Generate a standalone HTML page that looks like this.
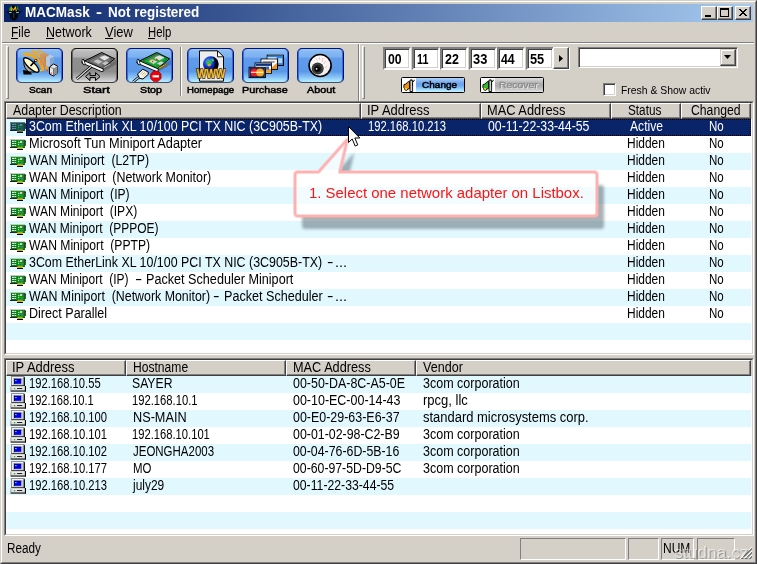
<!DOCTYPE html><html><head><meta charset="utf-8"><title>MACMask - Not registered</title><style>
*{box-sizing:border-box;margin:0;padding:0}
html,body{width:757px;height:564px;overflow:hidden;background:#d4d0c8}
body{position:relative;font-family:"Liberation Sans",sans-serif;font-size:12px;color:#000;line-height:17px}
.a{position:absolute}
.t{position:absolute;white-space:pre;line-height:17px;height:17px}
.x{position:absolute;display:block;white-space:pre;line-height:20px;height:20px;transform-origin:0 0}
#win{position:absolute;left:0;top:0;width:757px;height:564px;background:#d4d0c8;
 border-left:1px solid #d4d0c8;border-top:1px solid #d4d0c8;border-right:1px solid #404040;border-bottom:1px solid #404040}
#win2{position:absolute;left:1px;top:1px;width:755px;height:562px;border-left:1px solid #fff;border-top:1px solid #fff;border-right:1px solid #808080;border-bottom:1px solid #808080}
#title{left:4px;top:4px;width:749px;height:18px;background:linear-gradient(90deg,#0a246a,#a6caf0)}
#title .tt{left:20px;top:0;color:#fff;font-weight:bold;font-size:13px;line-height:18px;letter-spacing:0.35px;white-space:pre}
.cb{position:absolute;top:6px;width:16px;height:14px;background:#d4d0c8;border:1px solid;border-color:#fff #404040 #404040 #fff;box-shadow:inset -1px -1px 0 #808080}
.menu{position:absolute;top:23px;font-size:13px;line-height:18px;white-space:pre}
.menu u{text-decoration:underline;text-underline-offset:1px}
.sunk{position:absolute;border:1px solid;border-color:#808080 #fff #fff #808080}
.sunk>.in{position:absolute;left:0;top:0;right:0;bottom:0;border:1px solid;border-color:#404040 #d4d0c8 #d4d0c8 #404040;background:#fff;overflow:hidden}
.hd{position:absolute;top:0;height:16px;background:#d4d0c8;border:1px solid;border-color:#fff #404040 #404040 #fff;box-shadow:inset -1px -1px 0 #808080;font-size:12px;line-height:14px;white-space:pre;overflow:hidden}
.row{position:absolute;left:0;width:745px;height:17px}
.lb{background:#e2f8ff}
.tb{position:absolute;top:48px;width:47px;height:35px;overflow:hidden;border-radius:5px;border:1px solid;border-color:#00107c #001070 #40506c #0c2c9c;
 background:linear-gradient(180deg,#a0c8f6 0%,#88baf2 7%,#7cb0f0 24%,#609cea 28%,#5a98e8 68%,#84c0f6 84%,#b8f0ff 100%);box-shadow:inset 1px 0 0 #3c6cd8,inset -1px 0 0 #3c6cd8}
.tb.g{border-color:#101010 #000 #404040 #202020;background:linear-gradient(180deg,#d0d0d0 0%,#bcbcbc 7%,#b0b0b0 24%,#909090 28%,#8c8c8c 68%,#b0b0b0 84%,#dcdcdc 100%);box-shadow:inset 1px 0 0 #686868,inset -1px 0 0 #686868}
.tl{position:absolute;top:84px;height:12px;font-size:10px;line-height:12px;text-align:center;white-space:pre;letter-spacing:0.4px;font-weight:bold}
.ed{position:absolute;top:47px;width:28px;height:23px;border:2px solid;border-color:#808080 #fff #fff #808080;background:#fff;box-shadow:inset 1px 1px 0 #404040, inset -1px -1px 0 #d4d0c8;font-weight:bold;font-size:13px;line-height:21px;padding-left:3px;white-space:pre}
.grip{position:absolute;width:3px;border:1px solid;border-color:#fff #808080 #808080 #fff;background:#d4d0c8}
.sp{position:absolute;top:538px;height:22px;border:1px solid;border-color:#808080 #fff #fff #808080}
</style></head><body>
<div id="win"></div><div id="win2"></div>
<div id="title" class="a">
<svg class="a" style="left:2px;top:1px" width="16" height="16" viewBox="0 0 16 16"><path d="M0 6.3 L3.2 6.5 Q2.5 1.2 7.8 0.3 Q13.2 1.2 12.6 6.5 L16 6.3 L13 9 L12.2 9.6 L11.8 13 L9.5 15.2 L8 15.6 L6.3 15.2 L4 13 L3.7 9.6 L3 9Z" fill="#04080c"/><path d="M3.4 5.8 Q2.6 2 6 1 L5.2 6Z" fill="#20b020"/><path d="M10.5 1.2 Q13 2.5 12.4 5.5 L11 4Z" fill="#18a018"/><path d="M5 6 L5.4 1.8 L7.3 4.2 L9.6 1.2 L11 6.2 L9.8 6.2 L9.2 3.8 L7.4 6 L6.3 4 L6 6.2Z" fill="#f8a810"/><path d="M8.6 2.6 L9.6 1.2 L10 2.8Z" fill="#f8e020"/><rect x="3" y="7" width="2.6" height="1.1" fill="#70c0f8"/><rect x="10.2" y="7" width="2.6" height="1.1" fill="#70c0f8"/><path d="M7.4 8 L8.2 8 L8.1 13 L7.5 13Z" fill="#305868"/><path d="M4.6 13 Q8 16.5 11.2 13 L9.5 14.3 L8 14.8 L6.3 14.3Z" fill="#20a828"/></svg>
</div>
<div class="a" style="left:0;top:0">
<span class="x" style="left:24.80px;top:2px;font-size:14px;font-weight:bold;color:#fff;transform:scaleX(0.9672);">MACMask</span>
 
<span class="x" style="left:96.20px;top:2px;font-size:14px;font-weight:bold;color:#fff;transform:scaleX(1.2800);">-</span>
 
<span class="x" style="left:108.00px;top:2px;font-size:14px;font-weight:bold;color:#fff;transform:scaleX(0.9621);">Not registered</span>
</div>
<div class="cb" style="left:701px"><div class="a" style="left:3px;top:8px;width:6px;height:2px;background:#000"></div></div>
<div class="cb" style="left:717px"><div class="a" style="left:2px;top:1px;width:9px;height:9px;border:1px solid #000;border-top-width:2px"></div></div>
<div class="cb" style="left:735px"><svg class="a" style="left:3px;top:2px" width="8" height="7" viewBox="0 0 8 7"><path d="M0 0L7 7M1 0L8 7M7 0L0 7M8 0L1 7" stroke="#000" stroke-width="1" fill="none" shape-rendering="crispEdges"/></svg></div>
<div class="x" style="left:11.20px;top:22px;font-size:14px;transform:scaleX(0.8591);">File</div>
<div class="a" style="left:11px;top:38px;width:7px;height:1px;background:#000"></div>
<div class="x" style="left:45.60px;top:22px;font-size:14px;transform:scaleX(0.8922);">Network</div>
<div class="a" style="left:46px;top:38px;width:8px;height:1px;background:#000"></div>
<div class="x" style="left:105.10px;top:22px;font-size:14px;transform:scaleX(0.9267);">View</div>
<div class="a" style="left:105px;top:38px;width:8px;height:1px;background:#000"></div>
<div class="x" style="left:147.50px;top:22px;font-size:14px;transform:scaleX(0.8103);">Help</div>
<div class="a" style="left:148px;top:38px;width:7px;height:1px;background:#000"></div>
<div class="a" style="left:2px;top:42px;width:752px;height:1px;background:#808080"></div><div class="a" style="left:2px;top:43px;width:752px;height:1px;background:#fff"></div>
<div class="grip" style="left:6px;top:46px;height:53px"></div>
<div class="a" style="left:358px;top:44px;width:1px;height:57px;background:#808080"></div><div class="a" style="left:359px;top:44px;width:1px;height:57px;background:#fff"></div>
<div class="grip" style="left:362px;top:46px;height:53px"></div>
<div class="a" style="left:180px;top:47px;width:1px;height:49px;background:#808080"></div><div class="a" style="left:181px;top:47px;width:1px;height:49px;background:#fff"></div>
<div class="tb " style="left:16px"><svg class="a" style="left:0;top:0" width="45" height="33" viewBox="1 1 45 33"><g fill="none" stroke="#f4a818" stroke-linecap="butt"><path d="M7.3 6.0 A19 19 0 0 1 26.9 23.0" stroke-width="3.2"/><path d="M15.2 2.9 A23.2 23.2 0 0 1 31.1 22.6" stroke-width="2.8" opacity=".9"/><path d="M21.6 1.4 A27.2 27.2 0 0 1 33.9 16.6" stroke-width="2.8" opacity=".7"/></g><path d="M24 7 L28.5 4.5 L33 7 L33 17 L28.5 19 L24 16.5Z" fill="#d88c50" opacity=".7"/><path d="M28.5 9 L33 7 L33 17 L28.5 19Z" fill="#c07840" opacity=".5"/><path d="M30 9 L34 6.5 L38 8.5 L38 17 L34 19.5 L30 17.5Z" fill="#b4cce8" opacity=".95"/><path d="M34 10.5 L38 8.5 L38 17 L34 19.5Z" fill="#7ea4d4" opacity=".95"/><path d="M33.5 19 L37.5 16 L41.5 18 L41.5 25 L37.5 28 L33.5 26Z" fill="#e8e8e8" stroke="#000" stroke-width="1" stroke-linejoin="round"/><path d="M37.5 20.5 L41.5 18 L41.5 25 L37.5 28Z" fill="#909090"/><path d="M33.5 19 L37.5 20.5 L37.5 28" fill="none" stroke="#404040" stroke-width=".6"/><rect x="34.6" y="24.5" width="1.2" height="1.2" fill="#f02020"/><rect x="30.5" y="21.5" width="1.3" height="1.3" fill="#f02020"/><rect x="24" y="22" width="1.2" height="1.2" fill="#ffe020"/><path d="M7 22 L14 23 L16 26.5 L7.5 26.5Z" fill="#000"/><path d="M8 13 Q7 20 13 24 L19 24 L10 12Z" fill="#a8a8a8" stroke="#000" stroke-width="1"/><ellipse cx="15.3" cy="16.8" rx="9.9" ry="3.5" transform="rotate(43 15 16.8)" fill="#fffcd0" stroke="#000" stroke-width="1.3"/><path d="M14.5 18 L19.8 12.4" stroke="#000" stroke-width="1.7"/><circle cx="19.8" cy="12.4" r="1.2" fill="#fff" stroke="#000" stroke-width=".8"/></svg></div>
<div class="x" style="left:28.90px;top:80px;font-size:9.6px;transform:scaleX(1.0591);-webkit-text-stroke:0.5px #000;">Scan</div>
<div class="tb g" style="left:71px"><svg class="a" style="left:0;top:0" width="45" height="33" viewBox="1 1 45 33"><path d="M31 24.5 L45 16.5 L45 11.5 L31.5 20Z" fill="#000" opacity=".22"/><path d="M12 13.8 L30.8 4.5 L43.6 10.8 L30.4 21.6Z" fill="#787878" stroke="#000" stroke-width="1" stroke-linejoin="round"/><path d="M17 13 L30.8 6 L41 11 L29.8 19.4Z" fill="none" stroke="#484848" stroke-width=".8"/><path d="M28.5 9.6 L33.5 7.2 L38.5 9.6 L33.5 12.4Z" fill="#e4e4e4"/><path d="M22.5 13.2 L26.5 11.2 L31.5 13.8 L27.5 16Z" fill="#c4c4c4"/><path d="M31 15.5 L35 13.3 L38 14.8 L34 17.2Z" fill="#c4c4c4"/><path d="M32 19.2 L39 15.4 L40 16.4 L33 20.4Z" fill="#d0d0d0" stroke="#202020" stroke-width=".5"/><path d="M12.3 14 L30.8 22" stroke="#000" stroke-width="3.8" stroke-linecap="round"/><path d="M12.3 14 L30.8 22" stroke="#fafafa" stroke-width="2.2" stroke-linecap="round"/><path d="M12 12.4 L13.2 16" stroke="#000" stroke-width="2.6" stroke-linecap="round"/><path d="M12 12.6 L13.1 15.8" stroke="#fff" stroke-width="1.3" stroke-linecap="round"/><path d="M20.5 18.2 L5.8 31" stroke="#000" stroke-width="2.8"/><path d="M20.5 18.2 L5.8 31" stroke="#ececec" stroke-width="1.1"/><path d="M14.5 28.6 L19 24.6 L19 27.6 L24.5 27.6 L24.5 24.6 L29 28.6 L24.5 32.6 L24.5 29.6 L19 29.6 L19 32.6Z" fill="#a4a4a4" stroke="#000" stroke-width="1" stroke-linejoin="miter"/></svg></div>
<div class="x" style="left:82.80px;top:80px;font-size:9.6px;transform:scaleX(1.3200);-webkit-text-stroke:0.5px #000;">Start</div>
<div class="tb " style="left:126px"><svg class="a" style="left:0;top:0" width="45" height="33" viewBox="1 1 45 33"><path d="M31 24.5 L45 16.5 L45 11.5 L31.5 20Z" fill="#000" opacity=".22"/><path d="M12 13.8 L30.8 4.5 L43.6 10.8 L30.4 21.6Z" fill="#1ca838" stroke="#000" stroke-width="1" stroke-linejoin="round"/><path d="M17 13 L30.8 6 L41 11 L29.8 19.4Z" fill="none" stroke="#0a6a1c" stroke-width=".8"/><path d="M28.5 9.6 L33.5 7.2 L38.5 9.6 L33.5 12.4Z" fill="#e0e0e0"/><path d="M22.5 13.2 L26.5 11.2 L31.5 13.8 L27.5 16Z" fill="#d0d4d0"/><path d="M31 15.5 L35 13.3 L38 14.8 L34 17.2Z" fill="#d0d4d0"/><g fill="#f020f0"><rect x="23" y="10.6" width="1.4" height="1.4"/><rect x="27" y="8.6" width="1.4" height="1.4"/><rect x="31" y="6.6" width="1.4" height="1.4"/></g><g fill="#f0e020"><rect x="24.6" y="11.8" width="1.4" height="1.4"/><rect x="28.6" y="9.8" width="1.4" height="1.4"/></g><g fill="#f03020"><rect x="26" y="12.8" width="1.3" height="1.3"/><rect x="30" y="10.8" width="1.3" height="1.3"/></g><path d="M32.6 19.6 L39.8 15.8 L40.8 17 L33.6 21Z" fill="#f0b818" stroke="#503000" stroke-width=".5"/><path d="M34.4 18.6 l.8 1.2 M36.2 17.7 l.8 1.2 M38 16.7 l.8 1.2" stroke="#503000" stroke-width=".5"/><path d="M12.3 14 L30.8 22" stroke="#000" stroke-width="3.8" stroke-linecap="round"/><path d="M12.3 14 L30.8 22" stroke="#fafafa" stroke-width="2.2" stroke-linecap="round"/><path d="M12 12.4 L13.2 16" stroke="#000" stroke-width="2.6" stroke-linecap="round"/><path d="M12 12.6 L13.1 15.8" stroke="#fff" stroke-width="1.3" stroke-linecap="round"/><path d="M15 27.5 L7 34" stroke="#000" stroke-width="2.6"/><path d="M15 27.5 L7 34" stroke="#c8d8e8" stroke-width="1.1"/><path d="M11.5 26 L16.8 21.2 L22.2 24 L22.2 26.4 L17 31 L13.5 30.3Z" fill="#f4f4ec" stroke="#000" stroke-width="1" stroke-linejoin="round"/><path d="M14.5 26 L17.5 23.2 M16 27 L19 24.2 M17.5 28 L20.5 25.2" stroke="#c0a040" stroke-width=".6"/><path d="M27.6 23 L32 23 L35.1 26.1 L35.1 30.5 L32 33.6 L27.6 33.6 L24.5 30.5 L24.5 26.1Z" fill="#f00008" stroke="#500000" stroke-width=".5"/><rect x="26.6" y="27.2" width="6.4" height="2.2" fill="#fff"/></svg></div>
<div class="x" style="left:139.60px;top:80px;font-size:9.6px;transform:scaleX(1.1150);-webkit-text-stroke:0.5px #000;">Stop</div>
<div class="tb " style="left:187px"><svg class="a" style="left:0;top:0" width="45" height="33" viewBox="1 1 45 33"><defs><radialGradient id="gl" cx=".35" cy=".35" r=".75"><stop offset="0" stop-color="#60a0ff"/><stop offset=".45" stop-color="#1030d0"/><stop offset=".8" stop-color="#000860"/><stop offset="1" stop-color="#000020"/></radialGradient></defs><path d="M12.5 2.8 H30.5 L36.5 8.8 V33.2 H12.5Z" fill="#ececec" stroke="#000" stroke-width="1" stroke-linejoin="miter"/><path d="M30.5 2.8 V8.8 H36.5Z" fill="#fff" stroke="#000" stroke-width=".9" stroke-linejoin="miter"/><circle cx="23.8" cy="16" r="7.8" fill="url(#gl)"/><path d="M19.5 13.5 Q22 11 24 12.5 Q25.5 14.5 23.5 17 Q21.5 19.5 20.5 17.5 Q19 16 19.5 13.5Z" fill="#30c040"/><path d="M21 16 Q23 15 24 17 Q23 19 21.5 18Z" fill="#f0a030"/><path d="M24.5 10.5 Q27 10 27 13 Q25.5 14 24.5 12.5Z" fill="#40d050"/><path d="M26.5 8.7 Q32.5 12 31.2 19 Q29.5 23.5 25 23.7 Q29.5 17 26.5 8.7Z" fill="#000" opacity=".85"/><text x="24" y="30" font-family="Liberation Sans,sans-serif" font-weight="bold" font-size="12" text-anchor="middle" fill="#f6c644" stroke="#402800" stroke-width="1.7" paint-order="stroke" textLength="28.5" lengthAdjust="spacingAndGlyphs">WWW</text></svg></div>
<div class="x" style="left:187.00px;top:80px;font-size:9.6px;transform:scaleX(1.0043);-webkit-text-stroke:0.5px #000;">Homepage</div>
<div class="tb " style="left:242px"><svg class="a" style="left:0;top:0" width="45" height="33" viewBox="1 1 45 33"><g transform="translate(25.2 7.2)"><rect x="0" y="0" width="16.3" height="10.3" fill="#fff" stroke="#000" stroke-width="1"/><rect x=".5" y=".5" width="15.3" height="9.3" fill="#2c84dc"/><rect x=".5" y="2" width="9" height="2" fill="#e8f0f8"/><rect x="11" y="3" width="4" height="5" fill="#b8d4f0"/></g><g transform="translate(19.1 11.1)"><rect x="0" y="0" width="16.3" height="10.3" fill="#fff" stroke="#000" stroke-width="1"/><rect x=".5" y=".5" width="15.3" height="9.3" fill="#f8f8f8"/><path d="M9 9.8 L15.8 4 V9.8Z" fill="#f09020"/><rect x="1.5" y="2" width="12" height="1.6" fill="#909090"/></g><g transform="translate(13.1 15)"><rect x="0" y="0" width="16.3" height="10.3" fill="#fff" stroke="#000" stroke-width="1"/><rect x=".5" y=".5" width="15.3" height="9.3" fill="#fff"/><rect x=".5" y=".5" width="15.3" height="2.4" fill="#10307c"/><rect x="10" y="6" width="5.8" height="3.8" fill="#f0a020"/><rect x="11" y="3.5" width="3" height="3" fill="#3060c0"/></g><g transform="translate(7.1 19.3)"><rect x="0" y="0" width="16.3" height="10.3" fill="#fff" stroke="#000" stroke-width="1"/><rect x=".5" y=".5" width="15.3" height="9.3" fill="#10246c"/><circle cx="5.3" cy="5.1" r="3.9" fill="#f01818"/><circle cx="11" cy="5.1" r="3.9" fill="#f8a818"/><rect x="2" y="4.4" width="12" height="1.3" fill="#fff" opacity=".8"/></g></svg></div>
<div class="x" style="left:242.00px;top:80px;font-size:9.6px;transform:scaleX(1.1268);-webkit-text-stroke:0.5px #000;">Purchase</div>
<div class="tb " style="left:297px"><svg class="a" style="left:0;top:0" width="45" height="33" viewBox="1 1 45 33"><defs><radialGradient id="ey" cx=".4" cy=".35" r=".7"><stop offset="0" stop-color="#fff"/><stop offset=".8" stop-color="#f4f0f0"/><stop offset="1" stop-color="#c8c8c8"/></radialGradient></defs><circle cx="23.6" cy="18" r="11" fill="#000" opacity=".55"/><circle cx="23.1" cy="17.5" r="11" fill="url(#ey)" stroke="#000" stroke-width="1.6"/><path d="M22 9 l1 3 M26 10 l-1 4 M29 13 l-2 3 M19 10 l1.5 2.5 M30 18 l-2 2" stroke="#f8a0a0" stroke-width=".7" fill="none"/><circle cx="20.7" cy="20.6" r="6" fill="#383838"/><circle cx="20.7" cy="20.6" r="4.4" fill="#202020" stroke="#585858" stroke-width=".6"/><circle cx="20.2" cy="21" r="2.6" fill="#000"/><circle cx="19.6" cy="20.8" r=".9" fill="#fff"/></svg></div>
<div class="x" style="left:306.80px;top:80px;font-size:9.6px;transform:scaleX(1.1280);-webkit-text-stroke:0.5px #000;">About</div>
<div class="ed" style="left:383px"></div>
<div class="x" style="left:388.00px;top:49px;font-size:14px;font-weight:bold;transform:scaleX(0.8750);">00</div>
<div class="ed" style="left:412px"></div>
<div class="x" style="left:416.50px;top:49px;font-size:14px;font-weight:bold;transform:scaleX(0.7667);">11</div>
<div class="ed" style="left:440px"></div>
<div class="x" style="left:444.80px;top:49px;font-size:14px;font-weight:bold;transform:scaleX(0.8875);">22</div>
<div class="ed" style="left:469px"></div>
<div class="x" style="left:472.50px;top:49px;font-size:14px;font-weight:bold;transform:scaleX(0.9187);">33</div>
<div class="ed" style="left:497px"></div>
<div class="x" style="left:501.30px;top:49px;font-size:14px;font-weight:bold;transform:scaleX(0.8750);">44</div>
<div class="ed" style="left:526px"></div>
<div class="x" style="left:529.60px;top:49px;font-size:14px;font-weight:bold;transform:scaleX(0.9125);">55</div>
<div class="a" style="left:553px;top:47px;width:16px;height:22px;background:#d4d0c8;border:1px solid;border-color:#fff #404040 #404040 #fff;box-shadow:inset -1px -1px 0 #808080, 1px 1px 0 #fff"><svg class="a" style="left:5px;top:7px" width="4" height="7"><path d="M0 0L4 3.5L0 7Z" fill="#000"/></svg></div>
<div class="a" style="left:578px;top:47px;width:160px;height:21px;border:1px solid;border-color:#808080 #fff #fff #808080;background:#fff;box-shadow:inset 1px 1px 0 #404040, inset -1px -1px 0 #d4d0c8"></div>
<div class="a" style="left:720px;top:49px;width:16px;height:17px;background:#d4d0c8;border:1px solid;border-color:#d4d0c8 #404040 #404040 #d4d0c8;box-shadow:inset -1px -1px 0 #808080, inset 1px 1px 0 #fff"><svg class="a" style="left:3px;top:5px" width="7" height="4"><path d="M0 0L7 0L3.5 4Z" fill="#000"/></svg></div>
<div class="a" style="left:401px;top:77px;width:64px;height:16px;border:1px solid #000;border-radius:1.5px;background:#fff;overflow:hidden"><div class="a" style="left:14px;top:0;width:48px;height:14px;background:linear-gradient(180deg,#b4d4f8 0%,#86b6f0 22%,#68a2ee 42%,#74aef0 60%,#a0d8fc 82%,#c4f4ff 100%)"></div><svg class="a" style="left:0;top:0" width="14" height="14" viewBox="0 0 14 14"><path d="M2 6.5 L4.2 6 L5.5 4.2 L7.6 3.2 L7.6 10.5 L5.8 11 L5 12.3 L3 12 L2.6 10.5 L1.8 9.5Z" fill="#f09010" stroke="#000" stroke-width=".9" stroke-linejoin="round"/><path d="M3 10 L5 10.2 L4.8 12 L3.2 11.6Z" fill="#fff000"/><path d="M8 2.2 L10.6 2.2 L10.6 13.5 L8 13.5Z" fill="#d4d4d4" stroke="#000" stroke-width=".9"/><path d="M9 1.2 L9.6 2.4 M10.6 3.8 L12 3.2 L12.2 1.8" stroke="#000" stroke-width=".9" fill="none"/><rect x="10" y="5.5" width="1" height="2" fill="#000"/></svg></div>
<div class="x" style="left:421.60px;top:75px;font-size:9.6px;color:#000;transform:scaleX(1.0441);-webkit-text-stroke:0.5px #000;">Change</div>
<div class="a" style="left:480px;top:77px;width:64px;height:16px;border:1px solid #000;border-radius:1.5px;background:#fff;overflow:hidden"><div class="a" style="left:14px;top:0;width:48px;height:14px;background:linear-gradient(180deg,#e0e0e0 0%,#c4c4c4 22%,#acacac 42%,#b0b0b0 60%,#c8c8c8 82%,#e4e4e4 100%)"></div><svg class="a" style="left:0;top:0" width="14" height="14" viewBox="0 0 14 14"><path d="M2 6.5 L4.2 6 L5.5 4.2 L7.6 3.2 L7.6 10.5 L5.8 11 L5 12.3 L3 12 L2.6 10.5 L1.8 9.5Z" fill="#30b828" stroke="#000" stroke-width=".9" stroke-linejoin="round"/><path d="M3 10 L5 10.2 L4.8 12 L3.2 11.6Z" fill="#f0f000"/><path d="M8 2.2 L10.6 2.2 L10.6 13.5 L8 13.5Z" fill="#d4d4d4" stroke="#000" stroke-width=".9"/><path d="M9 1.2 L9.6 2.4 M10.6 3.8 L12 3.2 L12.2 1.8" stroke="#000" stroke-width=".9" fill="none"/><rect x="10" y="5.5" width="1" height="2" fill="#000"/></svg></div>
<div class="x" style="left:498.90px;top:75px;font-size:9.6px;color:#8c8c8c;transform:scaleX(1.0806);-webkit-text-stroke:0.3px #8c8c8c;text-shadow:1px 1px 0 #e8e8e8;">Recover</div>
<div class="a" style="left:603px;top:83px;width:13px;height:13px;border:1px solid;border-color:#808080 #fff #fff #808080;background:#fff;box-shadow:inset 1px 1px 0 #404040, inset -1px -1px 0 #d4d0c8"></div>
<div class="x" style="left:620.90px;top:80px;font-size:11px;transform:scaleX(0.9453);">Fresh &amp; Show activ</div>
<div class="sunk" style="left:4px;top:101px;width:750px;height:254px"><div class="in">
<div class="row lb" style="top:16px"></div>
<div class="row" style="top:33px"></div>
<div class="row lb" style="top:50px"></div>
<div class="row" style="top:67px"></div>
<div class="row lb" style="top:84px"></div>
<div class="row" style="top:101px"></div>
<div class="row lb" style="top:118px"></div>
<div class="row" style="top:135px"></div>
<div class="row lb" style="top:152px"></div>
<div class="row" style="top:169px"></div>
<div class="row lb" style="top:186px"></div>
<div class="row" style="top:203px"></div>
<div class="row lb" style="top:220px"></div>
<div class="row" style="top:237px"></div>
<div class="a" style="left:0;top:0;width:100%;height:16px;background:#d4d0c8"></div>
<div class="hd" style="left:0px;width:355px"></div>
<div class="hd" style="left:355px;width:120px"></div>
<div class="hd" style="left:475px;width:130px"></div>
<div class="hd" style="left:605px;width:70px"></div>
<div class="hd" style="left:675px;width:70px"></div>
<div class="a" style="left:20px;top:16px;width:725px;height:17px;background:#0a246a;outline:1px dotted #000;outline-offset:-1px"></div>
<svg class="a" style="left:4px;top:19px" width="17" height="12" viewBox="0 0 17 12"><rect x="0" y="0" width="15" height="1" fill="#c8c8c8"/><rect x="0" y="1" width="15" height="8" fill="#16a81a"/><rect x="0" y="1" width="1" height="7" fill="#e8e0e8"/><rect x="1" y="1" width="1" height="8" fill="#0a6a10"/><rect x="6.5" y="1" width="1.2" height="8" fill="#0c7414"/><rect x="13.5" y="1" width="1" height="8" fill="#0a6a10"/><rect x="2" y="2" width="2" height="1" fill="#e0e8f0"/><rect x="4.5" y="2" width="1.6" height="1" fill="#e0e8f0"/><rect x="2" y="4" width="2" height="1" fill="#d0e0f8"/><rect x="4.5" y="4" width="1.6" height="1" fill="#e0e8f0"/><rect x="2" y="6" width="2" height="1" fill="#e0e8f0"/><rect x="4.5" y="6" width="1.6" height="1" fill="#e0e8f0"/><rect x="2" y="3" width="4.5" height="1" fill="#0c7c14"/><rect x="2" y="5" width="4.5" height="1" fill="#0c7c14"/><rect x="2" y="7" width="4.5" height="1" fill="#0c7c14"/><rect x="9.5" y="1.5" width="3.6" height="3" fill="#0c6c14"/><rect x="10" y="2" width="2.3" height="2" fill="#d8c8e8"/><rect x="8" y="3" width="1.5" height="1" fill="#b0d8b0"/><rect x="8" y="5" width="1" height="1" fill="#b0d8b0"/><rect x="9.5" y="6" width="3" height="1" fill="#404878"/><rect x="11" y="6" width="1" height="1" fill="#3080c0"/><rect x="14.5" y="1.5" width="1.5" height="5.5" fill="#183018"/><rect x="15" y="3" width="1" height="4" fill="#505050"/><rect x="0" y="8" width="7.5" height="1" fill="#202820"/><rect x="12.5" y="8" width="2.5" height="1" fill="#106018"/><rect x="7.3" y="8.3" width="5.4" height="1.7" fill="#f0a818"/><rect x="9.3" y="8.3" width="1.2" height="1.7" fill="#60d020"/><rect x="7" y="10" width="6" height="1" fill="#000"/><path d="M0 0H15V1.5H16V7H15V9H13V11H7V9H0Z" fill="#0a246a" opacity=".5"/></svg>
<svg class="a" style="left:4px;top:36px" width="17" height="12" viewBox="0 0 17 12"><rect x="0" y="0" width="15" height="1" fill="#c8c8c8"/><rect x="0" y="1" width="15" height="8" fill="#16a81a"/><rect x="0" y="1" width="1" height="7" fill="#e8e0e8"/><rect x="1" y="1" width="1" height="8" fill="#0a6a10"/><rect x="6.5" y="1" width="1.2" height="8" fill="#0c7414"/><rect x="13.5" y="1" width="1" height="8" fill="#0a6a10"/><rect x="2" y="2" width="2" height="1" fill="#e0e8f0"/><rect x="4.5" y="2" width="1.6" height="1" fill="#e0e8f0"/><rect x="2" y="4" width="2" height="1" fill="#d0e0f8"/><rect x="4.5" y="4" width="1.6" height="1" fill="#e0e8f0"/><rect x="2" y="6" width="2" height="1" fill="#e0e8f0"/><rect x="4.5" y="6" width="1.6" height="1" fill="#e0e8f0"/><rect x="2" y="3" width="4.5" height="1" fill="#0c7c14"/><rect x="2" y="5" width="4.5" height="1" fill="#0c7c14"/><rect x="2" y="7" width="4.5" height="1" fill="#0c7c14"/><rect x="9.5" y="1.5" width="3.6" height="3" fill="#0c6c14"/><rect x="10" y="2" width="2.3" height="2" fill="#d8c8e8"/><rect x="8" y="3" width="1.5" height="1" fill="#b0d8b0"/><rect x="8" y="5" width="1" height="1" fill="#b0d8b0"/><rect x="9.5" y="6" width="3" height="1" fill="#404878"/><rect x="11" y="6" width="1" height="1" fill="#3080c0"/><rect x="14.5" y="1.5" width="1.5" height="5.5" fill="#183018"/><rect x="15" y="3" width="1" height="4" fill="#505050"/><rect x="0" y="8" width="7.5" height="1" fill="#202820"/><rect x="12.5" y="8" width="2.5" height="1" fill="#106018"/><rect x="7.3" y="8.3" width="5.4" height="1.7" fill="#f0a818"/><rect x="9.3" y="8.3" width="1.2" height="1.7" fill="#60d020"/><rect x="7" y="10" width="6" height="1" fill="#000"/></svg>
<svg class="a" style="left:4px;top:53px" width="17" height="12" viewBox="0 0 17 12"><rect x="0" y="0" width="15" height="1" fill="#c8c8c8"/><rect x="0" y="1" width="15" height="8" fill="#16a81a"/><rect x="0" y="1" width="1" height="7" fill="#e8e0e8"/><rect x="1" y="1" width="1" height="8" fill="#0a6a10"/><rect x="6.5" y="1" width="1.2" height="8" fill="#0c7414"/><rect x="13.5" y="1" width="1" height="8" fill="#0a6a10"/><rect x="2" y="2" width="2" height="1" fill="#e0e8f0"/><rect x="4.5" y="2" width="1.6" height="1" fill="#e0e8f0"/><rect x="2" y="4" width="2" height="1" fill="#d0e0f8"/><rect x="4.5" y="4" width="1.6" height="1" fill="#e0e8f0"/><rect x="2" y="6" width="2" height="1" fill="#e0e8f0"/><rect x="4.5" y="6" width="1.6" height="1" fill="#e0e8f0"/><rect x="2" y="3" width="4.5" height="1" fill="#0c7c14"/><rect x="2" y="5" width="4.5" height="1" fill="#0c7c14"/><rect x="2" y="7" width="4.5" height="1" fill="#0c7c14"/><rect x="9.5" y="1.5" width="3.6" height="3" fill="#0c6c14"/><rect x="10" y="2" width="2.3" height="2" fill="#d8c8e8"/><rect x="8" y="3" width="1.5" height="1" fill="#b0d8b0"/><rect x="8" y="5" width="1" height="1" fill="#b0d8b0"/><rect x="9.5" y="6" width="3" height="1" fill="#404878"/><rect x="11" y="6" width="1" height="1" fill="#3080c0"/><rect x="14.5" y="1.5" width="1.5" height="5.5" fill="#183018"/><rect x="15" y="3" width="1" height="4" fill="#505050"/><rect x="0" y="8" width="7.5" height="1" fill="#202820"/><rect x="12.5" y="8" width="2.5" height="1" fill="#106018"/><rect x="7.3" y="8.3" width="5.4" height="1.7" fill="#f0a818"/><rect x="9.3" y="8.3" width="1.2" height="1.7" fill="#60d020"/><rect x="7" y="10" width="6" height="1" fill="#000"/></svg>
<svg class="a" style="left:4px;top:70px" width="17" height="12" viewBox="0 0 17 12"><rect x="0" y="0" width="15" height="1" fill="#c8c8c8"/><rect x="0" y="1" width="15" height="8" fill="#16a81a"/><rect x="0" y="1" width="1" height="7" fill="#e8e0e8"/><rect x="1" y="1" width="1" height="8" fill="#0a6a10"/><rect x="6.5" y="1" width="1.2" height="8" fill="#0c7414"/><rect x="13.5" y="1" width="1" height="8" fill="#0a6a10"/><rect x="2" y="2" width="2" height="1" fill="#e0e8f0"/><rect x="4.5" y="2" width="1.6" height="1" fill="#e0e8f0"/><rect x="2" y="4" width="2" height="1" fill="#d0e0f8"/><rect x="4.5" y="4" width="1.6" height="1" fill="#e0e8f0"/><rect x="2" y="6" width="2" height="1" fill="#e0e8f0"/><rect x="4.5" y="6" width="1.6" height="1" fill="#e0e8f0"/><rect x="2" y="3" width="4.5" height="1" fill="#0c7c14"/><rect x="2" y="5" width="4.5" height="1" fill="#0c7c14"/><rect x="2" y="7" width="4.5" height="1" fill="#0c7c14"/><rect x="9.5" y="1.5" width="3.6" height="3" fill="#0c6c14"/><rect x="10" y="2" width="2.3" height="2" fill="#d8c8e8"/><rect x="8" y="3" width="1.5" height="1" fill="#b0d8b0"/><rect x="8" y="5" width="1" height="1" fill="#b0d8b0"/><rect x="9.5" y="6" width="3" height="1" fill="#404878"/><rect x="11" y="6" width="1" height="1" fill="#3080c0"/><rect x="14.5" y="1.5" width="1.5" height="5.5" fill="#183018"/><rect x="15" y="3" width="1" height="4" fill="#505050"/><rect x="0" y="8" width="7.5" height="1" fill="#202820"/><rect x="12.5" y="8" width="2.5" height="1" fill="#106018"/><rect x="7.3" y="8.3" width="5.4" height="1.7" fill="#f0a818"/><rect x="9.3" y="8.3" width="1.2" height="1.7" fill="#60d020"/><rect x="7" y="10" width="6" height="1" fill="#000"/></svg>
<svg class="a" style="left:4px;top:87px" width="17" height="12" viewBox="0 0 17 12"><rect x="0" y="0" width="15" height="1" fill="#c8c8c8"/><rect x="0" y="1" width="15" height="8" fill="#16a81a"/><rect x="0" y="1" width="1" height="7" fill="#e8e0e8"/><rect x="1" y="1" width="1" height="8" fill="#0a6a10"/><rect x="6.5" y="1" width="1.2" height="8" fill="#0c7414"/><rect x="13.5" y="1" width="1" height="8" fill="#0a6a10"/><rect x="2" y="2" width="2" height="1" fill="#e0e8f0"/><rect x="4.5" y="2" width="1.6" height="1" fill="#e0e8f0"/><rect x="2" y="4" width="2" height="1" fill="#d0e0f8"/><rect x="4.5" y="4" width="1.6" height="1" fill="#e0e8f0"/><rect x="2" y="6" width="2" height="1" fill="#e0e8f0"/><rect x="4.5" y="6" width="1.6" height="1" fill="#e0e8f0"/><rect x="2" y="3" width="4.5" height="1" fill="#0c7c14"/><rect x="2" y="5" width="4.5" height="1" fill="#0c7c14"/><rect x="2" y="7" width="4.5" height="1" fill="#0c7c14"/><rect x="9.5" y="1.5" width="3.6" height="3" fill="#0c6c14"/><rect x="10" y="2" width="2.3" height="2" fill="#d8c8e8"/><rect x="8" y="3" width="1.5" height="1" fill="#b0d8b0"/><rect x="8" y="5" width="1" height="1" fill="#b0d8b0"/><rect x="9.5" y="6" width="3" height="1" fill="#404878"/><rect x="11" y="6" width="1" height="1" fill="#3080c0"/><rect x="14.5" y="1.5" width="1.5" height="5.5" fill="#183018"/><rect x="15" y="3" width="1" height="4" fill="#505050"/><rect x="0" y="8" width="7.5" height="1" fill="#202820"/><rect x="12.5" y="8" width="2.5" height="1" fill="#106018"/><rect x="7.3" y="8.3" width="5.4" height="1.7" fill="#f0a818"/><rect x="9.3" y="8.3" width="1.2" height="1.7" fill="#60d020"/><rect x="7" y="10" width="6" height="1" fill="#000"/></svg>
<svg class="a" style="left:4px;top:104px" width="17" height="12" viewBox="0 0 17 12"><rect x="0" y="0" width="15" height="1" fill="#c8c8c8"/><rect x="0" y="1" width="15" height="8" fill="#16a81a"/><rect x="0" y="1" width="1" height="7" fill="#e8e0e8"/><rect x="1" y="1" width="1" height="8" fill="#0a6a10"/><rect x="6.5" y="1" width="1.2" height="8" fill="#0c7414"/><rect x="13.5" y="1" width="1" height="8" fill="#0a6a10"/><rect x="2" y="2" width="2" height="1" fill="#e0e8f0"/><rect x="4.5" y="2" width="1.6" height="1" fill="#e0e8f0"/><rect x="2" y="4" width="2" height="1" fill="#d0e0f8"/><rect x="4.5" y="4" width="1.6" height="1" fill="#e0e8f0"/><rect x="2" y="6" width="2" height="1" fill="#e0e8f0"/><rect x="4.5" y="6" width="1.6" height="1" fill="#e0e8f0"/><rect x="2" y="3" width="4.5" height="1" fill="#0c7c14"/><rect x="2" y="5" width="4.5" height="1" fill="#0c7c14"/><rect x="2" y="7" width="4.5" height="1" fill="#0c7c14"/><rect x="9.5" y="1.5" width="3.6" height="3" fill="#0c6c14"/><rect x="10" y="2" width="2.3" height="2" fill="#d8c8e8"/><rect x="8" y="3" width="1.5" height="1" fill="#b0d8b0"/><rect x="8" y="5" width="1" height="1" fill="#b0d8b0"/><rect x="9.5" y="6" width="3" height="1" fill="#404878"/><rect x="11" y="6" width="1" height="1" fill="#3080c0"/><rect x="14.5" y="1.5" width="1.5" height="5.5" fill="#183018"/><rect x="15" y="3" width="1" height="4" fill="#505050"/><rect x="0" y="8" width="7.5" height="1" fill="#202820"/><rect x="12.5" y="8" width="2.5" height="1" fill="#106018"/><rect x="7.3" y="8.3" width="5.4" height="1.7" fill="#f0a818"/><rect x="9.3" y="8.3" width="1.2" height="1.7" fill="#60d020"/><rect x="7" y="10" width="6" height="1" fill="#000"/></svg>
<svg class="a" style="left:4px;top:121px" width="17" height="12" viewBox="0 0 17 12"><rect x="0" y="0" width="15" height="1" fill="#c8c8c8"/><rect x="0" y="1" width="15" height="8" fill="#16a81a"/><rect x="0" y="1" width="1" height="7" fill="#e8e0e8"/><rect x="1" y="1" width="1" height="8" fill="#0a6a10"/><rect x="6.5" y="1" width="1.2" height="8" fill="#0c7414"/><rect x="13.5" y="1" width="1" height="8" fill="#0a6a10"/><rect x="2" y="2" width="2" height="1" fill="#e0e8f0"/><rect x="4.5" y="2" width="1.6" height="1" fill="#e0e8f0"/><rect x="2" y="4" width="2" height="1" fill="#d0e0f8"/><rect x="4.5" y="4" width="1.6" height="1" fill="#e0e8f0"/><rect x="2" y="6" width="2" height="1" fill="#e0e8f0"/><rect x="4.5" y="6" width="1.6" height="1" fill="#e0e8f0"/><rect x="2" y="3" width="4.5" height="1" fill="#0c7c14"/><rect x="2" y="5" width="4.5" height="1" fill="#0c7c14"/><rect x="2" y="7" width="4.5" height="1" fill="#0c7c14"/><rect x="9.5" y="1.5" width="3.6" height="3" fill="#0c6c14"/><rect x="10" y="2" width="2.3" height="2" fill="#d8c8e8"/><rect x="8" y="3" width="1.5" height="1" fill="#b0d8b0"/><rect x="8" y="5" width="1" height="1" fill="#b0d8b0"/><rect x="9.5" y="6" width="3" height="1" fill="#404878"/><rect x="11" y="6" width="1" height="1" fill="#3080c0"/><rect x="14.5" y="1.5" width="1.5" height="5.5" fill="#183018"/><rect x="15" y="3" width="1" height="4" fill="#505050"/><rect x="0" y="8" width="7.5" height="1" fill="#202820"/><rect x="12.5" y="8" width="2.5" height="1" fill="#106018"/><rect x="7.3" y="8.3" width="5.4" height="1.7" fill="#f0a818"/><rect x="9.3" y="8.3" width="1.2" height="1.7" fill="#60d020"/><rect x="7" y="10" width="6" height="1" fill="#000"/></svg>
<svg class="a" style="left:4px;top:138px" width="17" height="12" viewBox="0 0 17 12"><rect x="0" y="0" width="15" height="1" fill="#c8c8c8"/><rect x="0" y="1" width="15" height="8" fill="#16a81a"/><rect x="0" y="1" width="1" height="7" fill="#e8e0e8"/><rect x="1" y="1" width="1" height="8" fill="#0a6a10"/><rect x="6.5" y="1" width="1.2" height="8" fill="#0c7414"/><rect x="13.5" y="1" width="1" height="8" fill="#0a6a10"/><rect x="2" y="2" width="2" height="1" fill="#e0e8f0"/><rect x="4.5" y="2" width="1.6" height="1" fill="#e0e8f0"/><rect x="2" y="4" width="2" height="1" fill="#d0e0f8"/><rect x="4.5" y="4" width="1.6" height="1" fill="#e0e8f0"/><rect x="2" y="6" width="2" height="1" fill="#e0e8f0"/><rect x="4.5" y="6" width="1.6" height="1" fill="#e0e8f0"/><rect x="2" y="3" width="4.5" height="1" fill="#0c7c14"/><rect x="2" y="5" width="4.5" height="1" fill="#0c7c14"/><rect x="2" y="7" width="4.5" height="1" fill="#0c7c14"/><rect x="9.5" y="1.5" width="3.6" height="3" fill="#0c6c14"/><rect x="10" y="2" width="2.3" height="2" fill="#d8c8e8"/><rect x="8" y="3" width="1.5" height="1" fill="#b0d8b0"/><rect x="8" y="5" width="1" height="1" fill="#b0d8b0"/><rect x="9.5" y="6" width="3" height="1" fill="#404878"/><rect x="11" y="6" width="1" height="1" fill="#3080c0"/><rect x="14.5" y="1.5" width="1.5" height="5.5" fill="#183018"/><rect x="15" y="3" width="1" height="4" fill="#505050"/><rect x="0" y="8" width="7.5" height="1" fill="#202820"/><rect x="12.5" y="8" width="2.5" height="1" fill="#106018"/><rect x="7.3" y="8.3" width="5.4" height="1.7" fill="#f0a818"/><rect x="9.3" y="8.3" width="1.2" height="1.7" fill="#60d020"/><rect x="7" y="10" width="6" height="1" fill="#000"/></svg>
<svg class="a" style="left:4px;top:155px" width="17" height="12" viewBox="0 0 17 12"><rect x="0" y="0" width="15" height="1" fill="#c8c8c8"/><rect x="0" y="1" width="15" height="8" fill="#16a81a"/><rect x="0" y="1" width="1" height="7" fill="#e8e0e8"/><rect x="1" y="1" width="1" height="8" fill="#0a6a10"/><rect x="6.5" y="1" width="1.2" height="8" fill="#0c7414"/><rect x="13.5" y="1" width="1" height="8" fill="#0a6a10"/><rect x="2" y="2" width="2" height="1" fill="#e0e8f0"/><rect x="4.5" y="2" width="1.6" height="1" fill="#e0e8f0"/><rect x="2" y="4" width="2" height="1" fill="#d0e0f8"/><rect x="4.5" y="4" width="1.6" height="1" fill="#e0e8f0"/><rect x="2" y="6" width="2" height="1" fill="#e0e8f0"/><rect x="4.5" y="6" width="1.6" height="1" fill="#e0e8f0"/><rect x="2" y="3" width="4.5" height="1" fill="#0c7c14"/><rect x="2" y="5" width="4.5" height="1" fill="#0c7c14"/><rect x="2" y="7" width="4.5" height="1" fill="#0c7c14"/><rect x="9.5" y="1.5" width="3.6" height="3" fill="#0c6c14"/><rect x="10" y="2" width="2.3" height="2" fill="#d8c8e8"/><rect x="8" y="3" width="1.5" height="1" fill="#b0d8b0"/><rect x="8" y="5" width="1" height="1" fill="#b0d8b0"/><rect x="9.5" y="6" width="3" height="1" fill="#404878"/><rect x="11" y="6" width="1" height="1" fill="#3080c0"/><rect x="14.5" y="1.5" width="1.5" height="5.5" fill="#183018"/><rect x="15" y="3" width="1" height="4" fill="#505050"/><rect x="0" y="8" width="7.5" height="1" fill="#202820"/><rect x="12.5" y="8" width="2.5" height="1" fill="#106018"/><rect x="7.3" y="8.3" width="5.4" height="1.7" fill="#f0a818"/><rect x="9.3" y="8.3" width="1.2" height="1.7" fill="#60d020"/><rect x="7" y="10" width="6" height="1" fill="#000"/></svg>
<svg class="a" style="left:4px;top:172px" width="17" height="12" viewBox="0 0 17 12"><rect x="0" y="0" width="15" height="1" fill="#c8c8c8"/><rect x="0" y="1" width="15" height="8" fill="#16a81a"/><rect x="0" y="1" width="1" height="7" fill="#e8e0e8"/><rect x="1" y="1" width="1" height="8" fill="#0a6a10"/><rect x="6.5" y="1" width="1.2" height="8" fill="#0c7414"/><rect x="13.5" y="1" width="1" height="8" fill="#0a6a10"/><rect x="2" y="2" width="2" height="1" fill="#e0e8f0"/><rect x="4.5" y="2" width="1.6" height="1" fill="#e0e8f0"/><rect x="2" y="4" width="2" height="1" fill="#d0e0f8"/><rect x="4.5" y="4" width="1.6" height="1" fill="#e0e8f0"/><rect x="2" y="6" width="2" height="1" fill="#e0e8f0"/><rect x="4.5" y="6" width="1.6" height="1" fill="#e0e8f0"/><rect x="2" y="3" width="4.5" height="1" fill="#0c7c14"/><rect x="2" y="5" width="4.5" height="1" fill="#0c7c14"/><rect x="2" y="7" width="4.5" height="1" fill="#0c7c14"/><rect x="9.5" y="1.5" width="3.6" height="3" fill="#0c6c14"/><rect x="10" y="2" width="2.3" height="2" fill="#d8c8e8"/><rect x="8" y="3" width="1.5" height="1" fill="#b0d8b0"/><rect x="8" y="5" width="1" height="1" fill="#b0d8b0"/><rect x="9.5" y="6" width="3" height="1" fill="#404878"/><rect x="11" y="6" width="1" height="1" fill="#3080c0"/><rect x="14.5" y="1.5" width="1.5" height="5.5" fill="#183018"/><rect x="15" y="3" width="1" height="4" fill="#505050"/><rect x="0" y="8" width="7.5" height="1" fill="#202820"/><rect x="12.5" y="8" width="2.5" height="1" fill="#106018"/><rect x="7.3" y="8.3" width="5.4" height="1.7" fill="#f0a818"/><rect x="9.3" y="8.3" width="1.2" height="1.7" fill="#60d020"/><rect x="7" y="10" width="6" height="1" fill="#000"/></svg>
<svg class="a" style="left:4px;top:189px" width="17" height="12" viewBox="0 0 17 12"><rect x="0" y="0" width="15" height="1" fill="#c8c8c8"/><rect x="0" y="1" width="15" height="8" fill="#16a81a"/><rect x="0" y="1" width="1" height="7" fill="#e8e0e8"/><rect x="1" y="1" width="1" height="8" fill="#0a6a10"/><rect x="6.5" y="1" width="1.2" height="8" fill="#0c7414"/><rect x="13.5" y="1" width="1" height="8" fill="#0a6a10"/><rect x="2" y="2" width="2" height="1" fill="#e0e8f0"/><rect x="4.5" y="2" width="1.6" height="1" fill="#e0e8f0"/><rect x="2" y="4" width="2" height="1" fill="#d0e0f8"/><rect x="4.5" y="4" width="1.6" height="1" fill="#e0e8f0"/><rect x="2" y="6" width="2" height="1" fill="#e0e8f0"/><rect x="4.5" y="6" width="1.6" height="1" fill="#e0e8f0"/><rect x="2" y="3" width="4.5" height="1" fill="#0c7c14"/><rect x="2" y="5" width="4.5" height="1" fill="#0c7c14"/><rect x="2" y="7" width="4.5" height="1" fill="#0c7c14"/><rect x="9.5" y="1.5" width="3.6" height="3" fill="#0c6c14"/><rect x="10" y="2" width="2.3" height="2" fill="#d8c8e8"/><rect x="8" y="3" width="1.5" height="1" fill="#b0d8b0"/><rect x="8" y="5" width="1" height="1" fill="#b0d8b0"/><rect x="9.5" y="6" width="3" height="1" fill="#404878"/><rect x="11" y="6" width="1" height="1" fill="#3080c0"/><rect x="14.5" y="1.5" width="1.5" height="5.5" fill="#183018"/><rect x="15" y="3" width="1" height="4" fill="#505050"/><rect x="0" y="8" width="7.5" height="1" fill="#202820"/><rect x="12.5" y="8" width="2.5" height="1" fill="#106018"/><rect x="7.3" y="8.3" width="5.4" height="1.7" fill="#f0a818"/><rect x="9.3" y="8.3" width="1.2" height="1.7" fill="#60d020"/><rect x="7" y="10" width="6" height="1" fill="#000"/></svg>
<svg class="a" style="left:4px;top:206px" width="17" height="12" viewBox="0 0 17 12"><rect x="0" y="0" width="15" height="1" fill="#c8c8c8"/><rect x="0" y="1" width="15" height="8" fill="#16a81a"/><rect x="0" y="1" width="1" height="7" fill="#e8e0e8"/><rect x="1" y="1" width="1" height="8" fill="#0a6a10"/><rect x="6.5" y="1" width="1.2" height="8" fill="#0c7414"/><rect x="13.5" y="1" width="1" height="8" fill="#0a6a10"/><rect x="2" y="2" width="2" height="1" fill="#e0e8f0"/><rect x="4.5" y="2" width="1.6" height="1" fill="#e0e8f0"/><rect x="2" y="4" width="2" height="1" fill="#d0e0f8"/><rect x="4.5" y="4" width="1.6" height="1" fill="#e0e8f0"/><rect x="2" y="6" width="2" height="1" fill="#e0e8f0"/><rect x="4.5" y="6" width="1.6" height="1" fill="#e0e8f0"/><rect x="2" y="3" width="4.5" height="1" fill="#0c7c14"/><rect x="2" y="5" width="4.5" height="1" fill="#0c7c14"/><rect x="2" y="7" width="4.5" height="1" fill="#0c7c14"/><rect x="9.5" y="1.5" width="3.6" height="3" fill="#0c6c14"/><rect x="10" y="2" width="2.3" height="2" fill="#d8c8e8"/><rect x="8" y="3" width="1.5" height="1" fill="#b0d8b0"/><rect x="8" y="5" width="1" height="1" fill="#b0d8b0"/><rect x="9.5" y="6" width="3" height="1" fill="#404878"/><rect x="11" y="6" width="1" height="1" fill="#3080c0"/><rect x="14.5" y="1.5" width="1.5" height="5.5" fill="#183018"/><rect x="15" y="3" width="1" height="4" fill="#505050"/><rect x="0" y="8" width="7.5" height="1" fill="#202820"/><rect x="12.5" y="8" width="2.5" height="1" fill="#106018"/><rect x="7.3" y="8.3" width="5.4" height="1.7" fill="#f0a818"/><rect x="9.3" y="8.3" width="1.2" height="1.7" fill="#60d020"/><rect x="7" y="10" width="6" height="1" fill="#000"/></svg>
</div></div>
<div class="sunk" style="left:4px;top:358px;width:750px;height:178px"><div class="in">
<div class="row lb" style="top:16px"></div>
<div class="row" style="top:33px"></div>
<div class="row lb" style="top:50px"></div>
<div class="row" style="top:67px"></div>
<div class="row lb" style="top:84px"></div>
<div class="row" style="top:101px"></div>
<div class="row lb" style="top:118px"></div>
<div class="row" style="top:135px"></div>
<div class="row lb" style="top:152px"></div>
<div class="row" style="top:169px"></div>
<div class="a" style="left:0;top:0;width:100%;height:16px;background:#d4d0c8"></div>
<div class="hd" style="left:0px;width:120px"></div>
<div class="hd" style="left:120px;width:160px"></div>
<div class="hd" style="left:280px;width:130px"></div>
<div class="hd" style="left:410px;width:335px"></div>
<svg class="a" style="left:4px;top:16px" width="17" height="17" viewBox="0 0 17 17"><rect x="1.5" y="0.5" width="12.5" height="9" fill="#c8c8c8" stroke="#909090" stroke-width="1"/><rect x="2" y="1" width="11" height="1" fill="#f4f4f4"/><rect x="2" y="1" width="1" height="8" fill="#ececec"/><rect x="13.8" y="1.2" width="1.1" height="9" fill="#000"/><rect x="1.4" y="9.5" width="13.5" height="1" fill="#000"/><rect x="4" y="2.8" width="7.2" height="5" fill="#0000e4"/><rect x="4" y="2.8" width="7.2" height=".9" fill="#000070"/><rect x="4" y="2.8" width=".9" height="5" fill="#000070"/><rect x="5.1" y="4.1" width="1.5" height="1" fill="#60f0ff"/><rect x="0.5" y="10.5" width="14.5" height="4.2" fill="#dedede"/><rect x="0.5" y="10.5" width="14.5" height="1" fill="#f8f8f8"/><rect x="0.4" y="10.5" width="1" height="4" fill="#a0a0a0"/><rect x="14.9" y="10" width="1.1" height="5.4" fill="#000"/><rect x="0.6" y="14.5" width="15.4" height="1.1" fill="#000"/><rect x="4" y="12.2" width="1.2" height="1" fill="#00a000"/><rect x="7.1" y="12" width="5.1" height="1" fill="#202020"/></svg>
<svg class="a" style="left:4px;top:33px" width="17" height="17" viewBox="0 0 17 17"><rect x="1.5" y="0.5" width="12.5" height="9" fill="#c8c8c8" stroke="#909090" stroke-width="1"/><rect x="2" y="1" width="11" height="1" fill="#f4f4f4"/><rect x="2" y="1" width="1" height="8" fill="#ececec"/><rect x="13.8" y="1.2" width="1.1" height="9" fill="#000"/><rect x="1.4" y="9.5" width="13.5" height="1" fill="#000"/><rect x="4" y="2.8" width="7.2" height="5" fill="#0000e4"/><rect x="4" y="2.8" width="7.2" height=".9" fill="#000070"/><rect x="4" y="2.8" width=".9" height="5" fill="#000070"/><rect x="5.1" y="4.1" width="1.5" height="1" fill="#60f0ff"/><rect x="0.5" y="10.5" width="14.5" height="4.2" fill="#dedede"/><rect x="0.5" y="10.5" width="14.5" height="1" fill="#f8f8f8"/><rect x="0.4" y="10.5" width="1" height="4" fill="#a0a0a0"/><rect x="14.9" y="10" width="1.1" height="5.4" fill="#000"/><rect x="0.6" y="14.5" width="15.4" height="1.1" fill="#000"/><rect x="4" y="12.2" width="1.2" height="1" fill="#00a000"/><rect x="7.1" y="12" width="5.1" height="1" fill="#202020"/></svg>
<svg class="a" style="left:4px;top:50px" width="17" height="17" viewBox="0 0 17 17"><rect x="1.5" y="0.5" width="12.5" height="9" fill="#c8c8c8" stroke="#909090" stroke-width="1"/><rect x="2" y="1" width="11" height="1" fill="#f4f4f4"/><rect x="2" y="1" width="1" height="8" fill="#ececec"/><rect x="13.8" y="1.2" width="1.1" height="9" fill="#000"/><rect x="1.4" y="9.5" width="13.5" height="1" fill="#000"/><rect x="4" y="2.8" width="7.2" height="5" fill="#0000e4"/><rect x="4" y="2.8" width="7.2" height=".9" fill="#000070"/><rect x="4" y="2.8" width=".9" height="5" fill="#000070"/><rect x="5.1" y="4.1" width="1.5" height="1" fill="#60f0ff"/><rect x="0.5" y="10.5" width="14.5" height="4.2" fill="#dedede"/><rect x="0.5" y="10.5" width="14.5" height="1" fill="#f8f8f8"/><rect x="0.4" y="10.5" width="1" height="4" fill="#a0a0a0"/><rect x="14.9" y="10" width="1.1" height="5.4" fill="#000"/><rect x="0.6" y="14.5" width="15.4" height="1.1" fill="#000"/><rect x="4" y="12.2" width="1.2" height="1" fill="#00a000"/><rect x="7.1" y="12" width="5.1" height="1" fill="#202020"/></svg>
<svg class="a" style="left:4px;top:67px" width="17" height="17" viewBox="0 0 17 17"><rect x="1.5" y="0.5" width="12.5" height="9" fill="#c8c8c8" stroke="#909090" stroke-width="1"/><rect x="2" y="1" width="11" height="1" fill="#f4f4f4"/><rect x="2" y="1" width="1" height="8" fill="#ececec"/><rect x="13.8" y="1.2" width="1.1" height="9" fill="#000"/><rect x="1.4" y="9.5" width="13.5" height="1" fill="#000"/><rect x="4" y="2.8" width="7.2" height="5" fill="#0000e4"/><rect x="4" y="2.8" width="7.2" height=".9" fill="#000070"/><rect x="4" y="2.8" width=".9" height="5" fill="#000070"/><rect x="5.1" y="4.1" width="1.5" height="1" fill="#60f0ff"/><rect x="0.5" y="10.5" width="14.5" height="4.2" fill="#dedede"/><rect x="0.5" y="10.5" width="14.5" height="1" fill="#f8f8f8"/><rect x="0.4" y="10.5" width="1" height="4" fill="#a0a0a0"/><rect x="14.9" y="10" width="1.1" height="5.4" fill="#000"/><rect x="0.6" y="14.5" width="15.4" height="1.1" fill="#000"/><rect x="4" y="12.2" width="1.2" height="1" fill="#00a000"/><rect x="7.1" y="12" width="5.1" height="1" fill="#202020"/></svg>
<svg class="a" style="left:4px;top:84px" width="17" height="17" viewBox="0 0 17 17"><rect x="1.5" y="0.5" width="12.5" height="9" fill="#c8c8c8" stroke="#909090" stroke-width="1"/><rect x="2" y="1" width="11" height="1" fill="#f4f4f4"/><rect x="2" y="1" width="1" height="8" fill="#ececec"/><rect x="13.8" y="1.2" width="1.1" height="9" fill="#000"/><rect x="1.4" y="9.5" width="13.5" height="1" fill="#000"/><rect x="4" y="2.8" width="7.2" height="5" fill="#0000e4"/><rect x="4" y="2.8" width="7.2" height=".9" fill="#000070"/><rect x="4" y="2.8" width=".9" height="5" fill="#000070"/><rect x="5.1" y="4.1" width="1.5" height="1" fill="#60f0ff"/><rect x="0.5" y="10.5" width="14.5" height="4.2" fill="#dedede"/><rect x="0.5" y="10.5" width="14.5" height="1" fill="#f8f8f8"/><rect x="0.4" y="10.5" width="1" height="4" fill="#a0a0a0"/><rect x="14.9" y="10" width="1.1" height="5.4" fill="#000"/><rect x="0.6" y="14.5" width="15.4" height="1.1" fill="#000"/><rect x="4" y="12.2" width="1.2" height="1" fill="#00a000"/><rect x="7.1" y="12" width="5.1" height="1" fill="#202020"/></svg>
<svg class="a" style="left:4px;top:101px" width="17" height="17" viewBox="0 0 17 17"><rect x="1.5" y="0.5" width="12.5" height="9" fill="#c8c8c8" stroke="#909090" stroke-width="1"/><rect x="2" y="1" width="11" height="1" fill="#f4f4f4"/><rect x="2" y="1" width="1" height="8" fill="#ececec"/><rect x="13.8" y="1.2" width="1.1" height="9" fill="#000"/><rect x="1.4" y="9.5" width="13.5" height="1" fill="#000"/><rect x="4" y="2.8" width="7.2" height="5" fill="#0000e4"/><rect x="4" y="2.8" width="7.2" height=".9" fill="#000070"/><rect x="4" y="2.8" width=".9" height="5" fill="#000070"/><rect x="5.1" y="4.1" width="1.5" height="1" fill="#60f0ff"/><rect x="0.5" y="10.5" width="14.5" height="4.2" fill="#dedede"/><rect x="0.5" y="10.5" width="14.5" height="1" fill="#f8f8f8"/><rect x="0.4" y="10.5" width="1" height="4" fill="#a0a0a0"/><rect x="14.9" y="10" width="1.1" height="5.4" fill="#000"/><rect x="0.6" y="14.5" width="15.4" height="1.1" fill="#000"/><rect x="4" y="12.2" width="1.2" height="1" fill="#00a000"/><rect x="7.1" y="12" width="5.1" height="1" fill="#202020"/></svg>
<svg class="a" style="left:4px;top:118px" width="17" height="17" viewBox="0 0 17 17"><rect x="1.5" y="0.5" width="12.5" height="9" fill="#c8c8c8" stroke="#909090" stroke-width="1"/><rect x="2" y="1" width="11" height="1" fill="#f4f4f4"/><rect x="2" y="1" width="1" height="8" fill="#ececec"/><rect x="13.8" y="1.2" width="1.1" height="9" fill="#000"/><rect x="1.4" y="9.5" width="13.5" height="1" fill="#000"/><rect x="4" y="2.8" width="7.2" height="5" fill="#0000e4"/><rect x="4" y="2.8" width="7.2" height=".9" fill="#000070"/><rect x="4" y="2.8" width=".9" height="5" fill="#000070"/><rect x="5.1" y="4.1" width="1.5" height="1" fill="#60f0ff"/><rect x="0.5" y="10.5" width="14.5" height="4.2" fill="#dedede"/><rect x="0.5" y="10.5" width="14.5" height="1" fill="#f8f8f8"/><rect x="0.4" y="10.5" width="1" height="4" fill="#a0a0a0"/><rect x="14.9" y="10" width="1.1" height="5.4" fill="#000"/><rect x="0.6" y="14.5" width="15.4" height="1.1" fill="#000"/><rect x="4" y="12.2" width="1.2" height="1" fill="#00a000"/><rect x="7.1" y="12" width="5.1" height="1" fill="#202020"/></svg>
</div></div>
<div class="x" style="left:12.60px;top:100px;font-size:14px;transform:scaleX(0.8837);">Adapter Description</div>
<div class="x" style="left:366.57px;top:100px;font-size:14px;transform:scaleX(0.9258);">IP Address</div>
<div class="x" style="left:487.40px;top:100px;font-size:14px;transform:scaleX(0.9153);">MAC Address</div>
<div class="x" style="left:628.36px;top:100px;font-size:14px;transform:scaleX(0.8410);">Status</div>
<div class="x" style="left:690.70px;top:100px;font-size:14px;transform:scaleX(0.8719);">Changed</div>
<div class="x" style="left:11.57px;top:357px;font-size:14px;transform:scaleX(0.9273);">IP Address</div>
<div class="x" style="left:133.00px;top:357px;font-size:14px;transform:scaleX(0.8641);">Hostname</div>
<div class="x" style="left:292.70px;top:357px;font-size:14px;transform:scaleX(0.9094);">MAC Address</div>
<div class="x" style="left:422.80px;top:357px;font-size:14px;transform:scaleX(0.8977);">Vendor</div>
<div class="x" style="left:29.00px;top:116px;font-size:14px;color:#fff;transform:scaleX(0.8864);">3Com EtherLink XL 10/100 PCI TX NIC (3C905B-TX)</div>
<div class="x" style="left:367.80px;top:116px;font-size:14px;color:#fff;transform:scaleX(0.8021);">192.168.10.213</div>
<div class="x" style="left:487.60px;top:116px;font-size:14px;color:#fff;transform:scaleX(0.8767);">00-11-22-33-44-55</div>
<div class="x" style="left:629.70px;top:116px;font-size:14px;color:#fff;transform:scaleX(0.8658);">Active</div>
<div class="x" style="left:708.80px;top:116px;font-size:14px;color:#fff;transform:scaleX(0.8222);">No</div>
<div class="x" style="left:29.00px;top:133px;font-size:14px;transform:scaleX(0.9111);">Microsoft Tun Miniport Adapter</div>
<div class="x" style="left:626.60px;top:133px;font-size:14px;transform:scaleX(0.8545);">Hidden</div>
<div class="x" style="left:708.80px;top:133px;font-size:14px;transform:scaleX(0.8222);">No</div>
<div class="x" style="left:29.00px;top:150px;font-size:14px;transform:scaleX(0.8801);">WAN Miniport  (L2TP)</div>
<div class="x" style="left:626.60px;top:150px;font-size:14px;transform:scaleX(0.8545);">Hidden</div>
<div class="x" style="left:708.80px;top:150px;font-size:14px;transform:scaleX(0.8222);">No</div>
<div class="x" style="left:29.00px;top:167px;font-size:14px;transform:scaleX(0.8898);">WAN Miniport  (Network Monitor)</div>
<div class="x" style="left:626.60px;top:167px;font-size:14px;transform:scaleX(0.8545);">Hidden</div>
<div class="x" style="left:708.80px;top:167px;font-size:14px;transform:scaleX(0.8222);">No</div>
<div class="x" style="left:29.00px;top:184px;font-size:14px;transform:scaleX(0.8664);">WAN Miniport  (IP)</div>
<div class="x" style="left:626.60px;top:184px;font-size:14px;transform:scaleX(0.8545);">Hidden</div>
<div class="x" style="left:708.80px;top:184px;font-size:14px;transform:scaleX(0.8222);">No</div>
<div class="x" style="left:29.00px;top:201px;font-size:14px;transform:scaleX(0.8624);">WAN Miniport  (IPX)</div>
<div class="x" style="left:626.60px;top:201px;font-size:14px;transform:scaleX(0.8545);">Hidden</div>
<div class="x" style="left:708.80px;top:201px;font-size:14px;transform:scaleX(0.8222);">No</div>
<div class="x" style="left:29.00px;top:218px;font-size:14px;transform:scaleX(0.8563);">WAN Miniport  (PPPOE)</div>
<div class="x" style="left:626.60px;top:218px;font-size:14px;transform:scaleX(0.8545);">Hidden</div>
<div class="x" style="left:708.80px;top:218px;font-size:14px;transform:scaleX(0.8222);">No</div>
<div class="x" style="left:29.00px;top:235px;font-size:14px;transform:scaleX(0.8683);">WAN Miniport  (PPTP)</div>
<div class="x" style="left:626.60px;top:235px;font-size:14px;transform:scaleX(0.8545);">Hidden</div>
<div class="x" style="left:708.80px;top:235px;font-size:14px;transform:scaleX(0.8222);">No</div>
<div class="a" style="left:0;top:0">
<span class="x" style="left:29.00px;top:252px;font-size:14px;transform:scaleX(0.8864);">3Com EtherLink XL 10/100 PCI TX NIC (3C905B-TX)</span>
 
<span class="x" style="left:326.50px;top:252px;font-size:14px;transform:scaleX(1.3750);">-</span>
 
<span class="x" style="left:335.36px;top:252px;font-size:14px;transform:scaleX(1.0400);">...</span>
</div>
<div class="x" style="left:626.60px;top:252px;font-size:14px;transform:scaleX(0.8545);">Hidden</div>
<div class="x" style="left:708.80px;top:252px;font-size:14px;transform:scaleX(0.8222);">No</div>
<div class="a" style="left:0;top:0">
<span class="x" style="left:29.00px;top:269px;font-size:14px;transform:scaleX(0.8569);">WAN Miniport  (IP)</span>
 
<span class="x" style="left:135.00px;top:269px;font-size:14px;transform:scaleX(1.5500);">-</span>
 
<span class="x" style="left:146.30px;top:269px;font-size:14px;transform:scaleX(0.9018);">Packet Scheduler Miniport</span>
</div>
<div class="x" style="left:626.60px;top:269px;font-size:14px;transform:scaleX(0.8545);">Hidden</div>
<div class="x" style="left:708.80px;top:269px;font-size:14px;transform:scaleX(0.8222);">No</div>
<div class="a" style="left:0;top:0">
<span class="x" style="left:29.00px;top:286px;font-size:14px;transform:scaleX(0.8839);">WAN Miniport  (Network Monitor)</span>
 
<span class="x" style="left:212.60px;top:286px;font-size:14px;transform:scaleX(1.4000);">-</span>
 
<span class="x" style="left:224.00px;top:286px;font-size:14px;transform:scaleX(0.9000);">Packet Scheduler</span>
 
<span class="x" style="left:326.50px;top:286px;font-size:14px;transform:scaleX(1.3750);">-</span>
 
<span class="x" style="left:335.36px;top:286px;font-size:14px;transform:scaleX(1.0400);">...</span>
</div>
<div class="x" style="left:626.60px;top:286px;font-size:14px;transform:scaleX(0.8545);">Hidden</div>
<div class="x" style="left:708.80px;top:286px;font-size:14px;transform:scaleX(0.8222);">No</div>
<div class="x" style="left:29.00px;top:303px;font-size:14px;transform:scaleX(0.8966);">Direct Parallel</div>
<div class="x" style="left:626.60px;top:303px;font-size:14px;transform:scaleX(0.8545);">Hidden</div>
<div class="x" style="left:708.80px;top:303px;font-size:14px;transform:scaleX(0.8222);">No</div>
<div class="x" style="left:28.50px;top:373px;font-size:14px;transform:scaleX(0.8000);">192.168.10.55</div>
<div class="x" style="left:131.63px;top:373px;font-size:14px;transform:scaleX(0.8711);">SAYER</div>
<div class="x" style="left:292.70px;top:373px;font-size:14px;transform:scaleX(0.8889);">00-50-DA-8C-A5-0E</div>
<div class="x" style="left:422.60px;top:373px;font-size:14px;transform:scaleX(0.8944);">3com corporation</div>
<div class="x" style="left:28.51px;top:390px;font-size:14px;transform:scaleX(0.7925);">192.168.10.1</div>
<div class="x" style="left:131.70px;top:390px;font-size:14px;transform:scaleX(0.8025);">192.168.10.1</div>
<div class="x" style="left:292.70px;top:390px;font-size:14px;transform:scaleX(0.8908);">00-10-EC-00-14-43</div>
<div class="x" style="left:422.60px;top:390px;font-size:14px;transform:scaleX(0.9292);">rpcg, llc</div>
<div class="x" style="left:28.50px;top:407px;font-size:14px;transform:scaleX(0.8021);">192.168.10.100</div>
<div class="x" style="left:132.50px;top:407px;font-size:14px;transform:scaleX(0.9068);">NS-MAIN</div>
<div class="x" style="left:292.70px;top:407px;font-size:14px;transform:scaleX(0.8891);">00-E0-29-63-E6-37</div>
<div class="x" style="left:422.60px;top:407px;font-size:14px;transform:scaleX(0.9253);">standard microsystems corp.</div>
<div class="x" style="left:28.50px;top:424px;font-size:14px;transform:scaleX(0.8021);">192.168.10.101</div>
<div class="x" style="left:131.70px;top:424px;font-size:14px;transform:scaleX(0.8000);">192.168.10.101</div>
<div class="x" style="left:292.70px;top:424px;font-size:14px;transform:scaleX(0.8835);">00-01-02-98-C2-B9</div>
<div class="x" style="left:422.60px;top:424px;font-size:14px;transform:scaleX(0.8944);">3com corporation</div>
<div class="x" style="left:28.50px;top:441px;font-size:14px;transform:scaleX(0.8021);">192.168.10.102</div>
<div class="x" style="left:132.50px;top:441px;font-size:14px;transform:scaleX(0.8202);">JEONGHA2003</div>
<div class="x" style="left:292.70px;top:441px;font-size:14px;transform:scaleX(0.8817);">00-04-76-6D-5B-16</div>
<div class="x" style="left:422.60px;top:441px;font-size:14px;transform:scaleX(0.8944);">3com corporation</div>
<div class="x" style="left:28.50px;top:458px;font-size:14px;transform:scaleX(0.8021);">192.168.10.177</div>
<div class="x" style="left:132.50px;top:458px;font-size:14px;transform:scaleX(0.8174);">MO</div>
<div class="x" style="left:292.70px;top:458px;font-size:14px;transform:scaleX(0.8764);">00-60-97-5D-D9-5C</div>
<div class="x" style="left:422.60px;top:458px;font-size:14px;transform:scaleX(0.8944);">3com corporation</div>
<div class="x" style="left:28.50px;top:475px;font-size:14px;transform:scaleX(0.8021);">192.168.10.213</div>
<div class="x" style="left:132.50px;top:475px;font-size:14px;transform:scaleX(0.8541);">july29</div>
<div class="x" style="left:292.70px;top:475px;font-size:14px;transform:scaleX(0.8741);">00-11-22-33-44-55</div>
<svg class="a" style="left:280px;top:120px" width="340" height="120" viewBox="280 120 340 120"><defs><filter id="bl" x="-10%" y="-20%" width="120%" height="140%"><feGaussianBlur stdDeviation="1.6"/></filter><mask id="mk" maskUnits="userSpaceOnUse" x="280" y="120" width="340" height="120"><rect x="280" y="120" width="340" height="120" fill="#fff"/><path d="M298 172 H318.5 L347.3 139.5 L339.8 172 H594 Q597 172 597 175 V213 Q597 216 594 216 H298 Q295 216 295 213 V175 Q295 172 298 172Z" fill="#000" stroke="#000" stroke-width="2"/></mask></defs><g mask="url(#mk)"><path d="M298 172 H318.5 L347.3 139.5 L339.8 172 H594 Q597 172 597 175 V213 Q597 216 594 216 H298 Q295 216 295 213 V175 Q295 172 298 172Z" transform="translate(7 13)" fill="#203440" opacity=".38" filter="url(#bl)"/></g><path d="M298 172 H318.5 L347.3 139.5 L339.8 172 H594 Q597 172 597 175 V213 Q597 216 594 216 H298 Q295 216 295 213 V175 Q295 172 298 172Z" fill="#fff" fill-opacity=".55" stroke="#ffa8a8" stroke-opacity=".45" stroke-width="4" stroke-linejoin="round"/><path d="M298 172 H318.5 L347.3 139.5 L339.8 172 H594 Q597 172 597 175 V213 Q597 216 594 216 H298 Q295 216 295 213 V175 Q295 172 298 172Z" fill="none" stroke="#ffb0b0" stroke-width="2" stroke-linejoin="round"/></svg>
<div class="x" style="left:309.00px;top:183px;font-size:15px;color:#ff1414;transform:scaleX(0.9956);">1. Select one network adapter on Listbox.</div>
<svg class="a" style="left:348px;top:126px" width="13" height="21" viewBox="0 0 13 21"><path d="M0.5 0.5 V16.5 L4.2 13 L7.2 20 L9.8 18.9 L6.8 12 H11.8Z" fill="#fff" stroke="#000" stroke-width="1" stroke-linejoin="miter"/></svg>
<div class="x" style="left:6.90px;top:538px;font-size:14px;transform:scaleX(0.8366);">Ready</div>
<div class="sp" style="left:520px;width:106px"></div>
<div class="sp" style="left:628px;width:31px"></div>
<div class="sp" style="left:661px;width:33px"></div>
<div class="sp" style="left:697px;width:38px"></div>
<div class="x" style="left:663.20px;top:538px;font-size:14px;transform:scaleX(0.8562);">NUM</div>
<svg class="a" style="left:739px;top:546px" width="14" height="14" viewBox="0 0 14 14"><path d="M13 1L1 13M13 5L5 13M13 9L9 13" stroke="#fff" stroke-width="1"/><path d="M13 2L2 13M13 3L3 13M13 6L6 13M13 7L7 13M13 10L10 13M13 11L11 13" stroke="#808080" stroke-width="1"/></svg>
<div class="x" style="left:674.20px;top:542px;font-size:16.5px;color:rgba(255,255,255,.55);transform:scaleX(1.0557);text-shadow:1px 1px 0 rgba(40,40,40,.33);">studna.cz</div>
</body></html>
